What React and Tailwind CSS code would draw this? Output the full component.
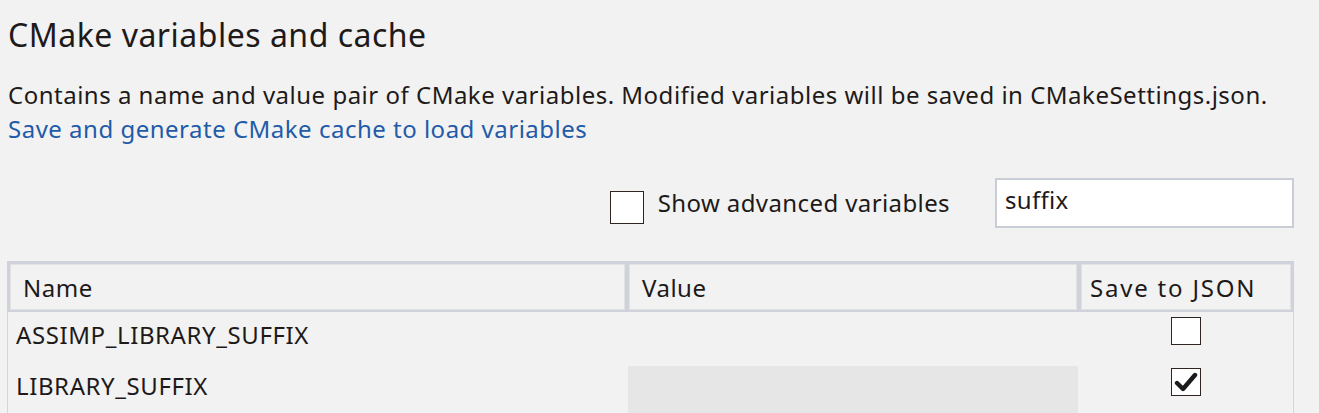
import React from "react";

function Check() {
  return (
    <svg width="24" height="20" viewBox="0 0 24 20">
      <path d="M3 11 L9 17 L21 3" fill="none" stroke="#1c1a1a" strokeWidth="4.4" strokeLinecap="round" strokeLinejoin="round" />
    </svg>
  );
}

export default function App() {
  const font = { fontFamily: '"Noto Sans", "Open Sans", sans-serif' };
  return (
    <div className="w-[1319px] h-[413px] overflow-hidden bg-[#f2f2f2] text-[#1e1a19]" style={font}>
      <div className="pl-[8px] pr-[25px]">
        <h1 className="pt-[13px] text-[32px] leading-[44px] font-normal tracking-[0.5px]">CMake variables and cache</h1>
        <div className="mt-[21px] text-[24px] leading-[34px] tracking-[0.5px]">
          <p className="whitespace-nowrap">Contains a name and value pair of CMake variables. Modified variables will be saved in CMakeSettings.json.</p>
          <p className="text-[#1f5ba8] whitespace-nowrap">Save and generate CMake cache to load variables</p>
        </div>
        <div className="mt-[32px] flex items-center justify-end h-[50px]">
          <div className="flex items-center mr-[45px]">
            <div className="w-[34px] h-[33px] border-[1.5px] border-[#2e2420] bg-white mt-[8px]"></div>
            <span className="ml-[14px] text-[24px] tracking-[0.4px] whitespace-nowrap">Show advanced variables</span>
          </div>
          <div className="w-[299px] h-[50px] border-2 border-[#c9cdd6] bg-white pl-[8px] pt-[6px] text-[24px] leading-[28px] tracking-[0.3px]">
            suffix
          </div>
        </div>
        <div className="mt-[33px] ml-[-1px] w-[1287px]">
          <div className="flex bg-[#cfd2da] px-[3px] pt-[3px] pb-[2px] gap-[4px] h-[51px] text-[24px] leading-[44px] tracking-[0.5px]">
            <div className="w-[615px] border border-[#e2e2e2] bg-[#f2f2f2] pl-[12px] pt-[1px]">Name</div>
            <div className="w-[448px] border border-[#e2e2e2] bg-[#f2f2f2] pl-[12px] pt-[1px]">Value</div>
            <div className="flex-1 border border-[#e2e2e2] bg-[#f2f2f2] pl-[8px] pt-[1px] tracking-[1.8px] whitespace-nowrap">Save to JSON</div>
          </div>
          <div className="border-x border-[#d4d6dc] text-[24px] leading-[46px] tracking-[0.6px]">
            <div className="flex h-[50px]">
              <div className="w-[620px] pl-[8px] whitespace-nowrap">ASSIMP_LIBRARY_SUFFIX</div>
              <div className="w-[450px]"></div>
              <div className="flex-1 flex justify-center pt-[5px]">
                <div className="w-[30px] h-[28px] border-[1.5px] border-[#2e2420] bg-white"></div>
              </div>
            </div>
            <div className="flex h-[52px]">
              <div className="w-[620px] pl-[8px] pt-[1px] whitespace-nowrap">LIBRARY_SUFFIX</div>
              <div className="w-[450px] mt-[4px] bg-[#e6e6e6]"></div>
              <div className="flex-1 flex justify-center pt-[6px]">
                <div className="w-[30px] h-[28px] border-[1.5px] border-[#2e2420] bg-white flex items-center justify-center">
                  <Check />
                </div>
              </div>
            </div>
          </div>
        </div>
      </div>
    </div>
  );
}
